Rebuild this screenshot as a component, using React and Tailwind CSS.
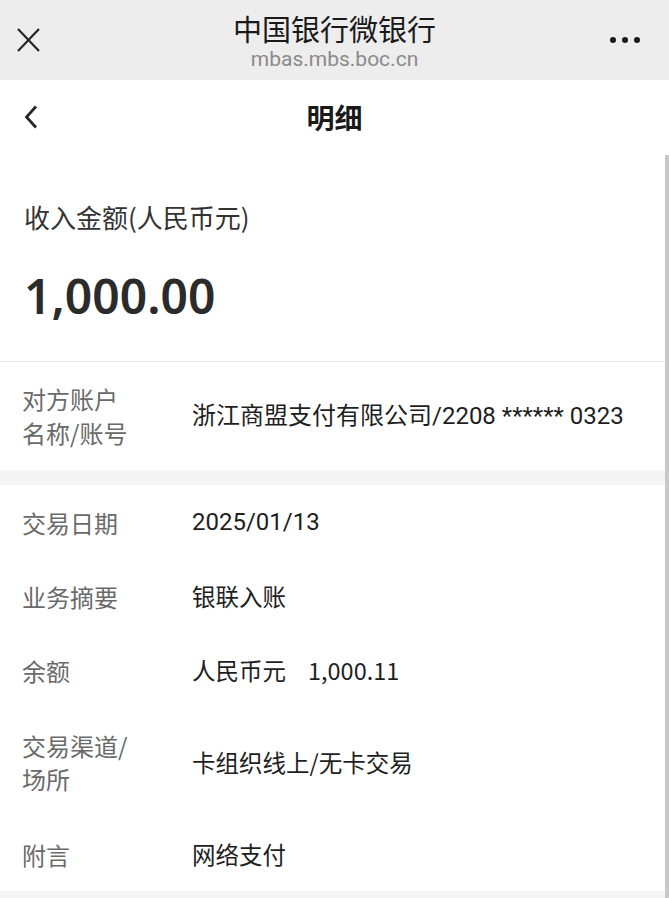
import React from "react";

const cjk = { fontFamily: '"Noto Sans CJK SC", "Noto Sans", sans-serif' };
const robo = { fontFamily: 'Roboto, "Noto Sans CJK SC", sans-serif' };

function Row({ label, value, robotoVal }) {
  return (
    <div className="flex items-center h-[74px]">
      <div className="w-[192px] pl-[22px] text-[24px] leading-[33px] text-[#6a6a6a]">{label}</div>
      <div
        className={`${robotoVal ? "text-[24px]" : "text-[23.5px]"} leading-[33px] text-[#1e1e1e]`}
        style={robotoVal ? robo : undefined}
      >
        {value}
      </div>
    </div>
  );
}

export default function App() {
  return (
    <div className="relative w-[669px] h-[898px] bg-white overflow-hidden" style={cjk}>
      {/* top bar */}
      <div className="relative h-[80px] bg-[#ededed] flex flex-col items-center">
        <div className="absolute left-[17px] top-[28px]">
          <svg width="23" height="24" viewBox="0 0 23 24">
            <path d="M1 1 L22 23 M22 1 L1 23" stroke="#262626" strokeWidth="2.2" fill="none" />
          </svg>
        </div>
        <div className="mt-[10px] text-[29px] leading-[36px] text-[#1a1a1a]">中国银行微银行</div>
        <div className="text-[21px] leading-[26px] text-[#8a8a8a]" style={{ fontFamily: "Roboto, sans-serif" }}>
          mbas.mbs.boc.cn
        </div>
        <div className="absolute left-[610px] top-[37px] flex gap-[6px]">
          <span className="w-[6px] h-[6px] rounded-full bg-[#1a1a1a]" />
          <span className="w-[6px] h-[6px] rounded-full bg-[#1a1a1a]" />
          <span className="w-[6px] h-[6px] rounded-full bg-[#1a1a1a]" />
        </div>
      </div>

      {/* nav */}
      <div className="relative h-[74px] flex items-center justify-center">
        <div className="absolute left-[24px] top-[25px]">
          <svg width="14" height="24" viewBox="0 0 14 24">
            <path d="M12 1.5 L2.5 12 L12 22.5" stroke="#262626" strokeWidth="2.8" fill="none" />
          </svg>
        </div>
        <div className="text-[28px] font-bold text-[#1a1a1a] leading-[36px]">明细</div>
      </div>

      {/* amount */}
      <div className="pt-[46px] pb-[37px] pl-[24px] border-b border-[#e6e6e6]">
        <div className="text-[26px] leading-[34px] text-[#333]">收入金额(人民币元)</div>
        <div
          className="mt-[34px] text-[48px] leading-[56px] font-semibold text-[#2b2b2b]"
          style={{ fontFamily: '"Noto Sans", sans-serif' }}
        >
          1,000.00
        </div>
      </div>

      {/* counterparty */}
      <div className="flex items-center h-[108px]">
        <div className="w-[192px] pl-[22px] text-[24px] leading-[34px] text-[#6a6a6a]">
          <div>对方账户</div>
          <div>名称/账号</div>
        </div>
        <div className="text-[24px] leading-[33px] text-[#1e1e1e]" style={robo}>
          浙江商盟支付有限公司/2208 ****** 0323
        </div>
      </div>

      <div className="h-[15px] bg-[#f4f4f4]" />

      <Row label="交易日期" value="2025/01/13" robotoVal />
      <Row label="业务摘要" value="银联入账" />
      <Row
        label="余额"
        value={
          <span>
            人民币元<span className="inline-block w-[22px]" />1,000.11
          </span>
        }
      />
      <div className="flex items-center h-[110px]">
        <div className="w-[192px] pl-[22px] text-[24px] leading-[33px] text-[#6a6a6a]">
          <div>交易渠道/</div>
          <div>场所</div>
        </div>
        <div className="text-[23.5px] leading-[33px] text-[#1e1e1e]">卡组织线上/无卡交易</div>
      </div>
      <Row label="附言" value="网络支付" />

      <div className="h-[10px] bg-[#f4f4f4]" />

      {/* scrollbar */}
      <div className="absolute right-0 top-[155px] bottom-0 w-[4px] bg-[#c8c8c8]" />
    </div>
  );
}
